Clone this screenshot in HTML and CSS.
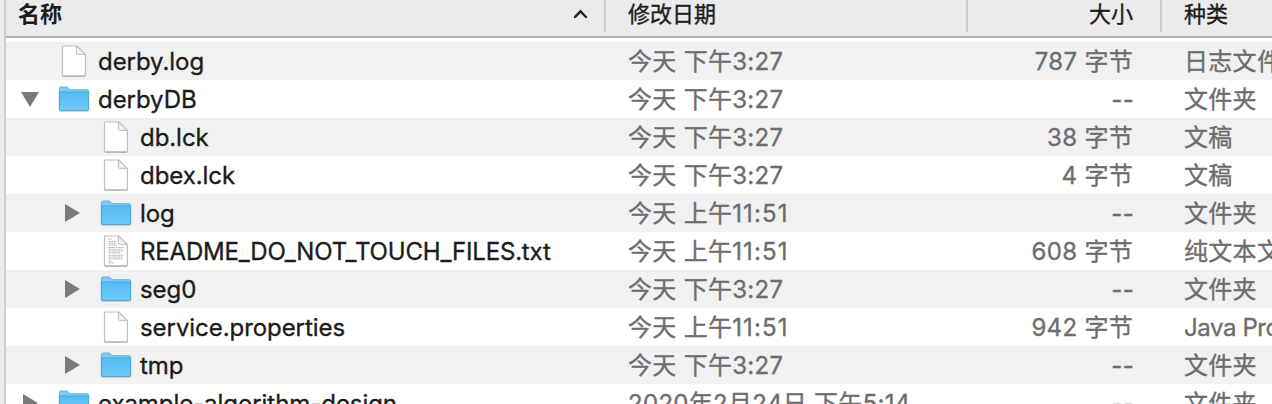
FILE: index.html
```html
<!DOCTYPE html>
<html lang="zh-CN">
<head>
<meta charset="utf-8">
<title>derbyDB</title>
<link rel="stylesheet" href="styles.css">
</head>
<body>
<svg class="defs" width="0" height="0" aria-hidden="true">
  <defs>
    <linearGradient id="blue" x1="0" y1="0" x2="0" y2="1"><stop offset="0" stop-color="#56bcf4"/><stop offset="1" stop-color="#6dcaf9"/></linearGradient>
    <linearGradient id="fold" x1="0" y1="1" x2="1" y2="0"><stop offset="0" stop-color="#fff"/><stop offset="1" stop-color="#ddd"/></linearGradient>
    <symbol id="folder" viewBox="0 -0.5 32 28">
      <path d="M1.5 25.5H30.5" stroke="#7a9aaa" stroke-opacity=".6" stroke-width="1.4"/>
      <path d="M1.4 24V3.2Q1.4 1.5 3 1.5H8.6Q9.8 1.5 10.6 2.5L11.3 3.4Q12 4.2 13.2 4.2H29.2Q30.6 4.2 30.6 5.6V24Z" fill="#83cbee" stroke="#62add2" stroke-width=".9"/>
      <path d="M1.4 6.4H30.6V23.8Q30.6 25 29.4 25H2.6Q1.4 25 1.4 23.8Z" fill="url(#blue)" stroke="#4ba5d5" stroke-width=".9"/>
    </symbol>
    <symbol id="page" viewBox="0 0.5 26 33">
      <path d="M1.5 1.5H15.8L24.4 10V30.4Q24.4 31.5 23.3 31.5H2.6Q1.5 31.5 1.5 30.4Z" fill="#fff" stroke="#c0c0c0" stroke-width="1.2" stroke-linejoin="round"/>
      <path d="M2 31.6H24" stroke="#a0a0a0" stroke-width="1"/>
      <path d="M15.4 1.6V8.4Q15.4 9.8 16.8 9.8H24.2Z" fill="url(#fold)" stroke="#bababa" stroke-width="1" stroke-linejoin="round"/>
    </symbol>
    <symbol id="text-page" viewBox="0 0 26 33">
      <use href="#page" width="26" height="33"/>
      <path d="M5.5 4H9M5.5 6.5H14M5.5 8.3H13M5.5 10.1H14M5.5 12.5H20.5M5.5 14.3H19.5M5.5 16.1H20.5M5.5 17.9H18M5.5 20.3H20.5M5.5 22.1H19.5M5.5 23.9H20M5.5 26.1H9M5.5 27.9H11" stroke="#b0b0b0" stroke-width=".9" stroke-dasharray="2.4 .5 1.5 .4"/>
    </symbol>
    <symbol id="right" viewBox="0 0 15 18"><path d="M0 0L15 9L0 18Z" fill="#7a7a7a"/></symbol>
    <symbol id="down" viewBox="0 0 18 15"><path d="M0 0H18L9 15Z" fill="#7a7a7a"/></symbol>
  </defs>
</svg>
<div class="window">
  <header class="row head">
    <div class="name sorted"><span>名称</span><svg class="sort" viewBox="0 0 15 10"><path d="M2 8L7.5 2.3L13 8" fill="none" stroke="#252525" stroke-width="2.5" stroke-linecap="round"/></svg></div>
    <div class="date">修改日期</div>
    <div class="size">大小</div>
    <div class="kind">种类</div>
  </header>
  <main class="list">
    <div class="row"><div class="name"><i class="toggle"></i><i class="icon"><svg class="page"><use href="#page"/></svg></i><span class="label">derby.log</span></div><div class="date">今天 下午<b class="time">3:27</b></div><div class="size"><b>787</b> 字节</div><div class="kind">日志文件</div></div>
    <div class="row"><div class="name"><i class="toggle"><svg class="down"><use href="#down"/></svg></i><i class="icon"><svg class="folder"><use href="#folder"/></svg></i><span class="label">derbyDB</span></div><div class="date">今天 下午<b class="time">3:27</b></div><div class="size dash">--</div><div class="kind">文件夹</div></div>
    <div class="row child"><div class="name"><i class="toggle"></i><i class="icon"><svg class="page"><use href="#page"/></svg></i><span class="label">db.lck</span></div><div class="date">今天 下午<b class="time">3:27</b></div><div class="size"><b>38</b> 字节</div><div class="kind">文稿</div></div>
    <div class="row child"><div class="name"><i class="toggle"></i><i class="icon"><svg class="page"><use href="#page"/></svg></i><span class="label">dbex.lck</span></div><div class="date">今天 下午<b class="time">3:27</b></div><div class="size"><b>4</b> 字节</div><div class="kind">文稿</div></div>
    <div class="row child"><div class="name"><i class="toggle"><svg class="right"><use href="#right"/></svg></i><i class="icon"><svg class="folder"><use href="#folder"/></svg></i><span class="label">log</span></div><div class="date">今天 上午<b class="time wide">11:51</b></div><div class="size dash">--</div><div class="kind">文件夹</div></div>
    <div class="row child"><div class="name"><i class="toggle"></i><i class="icon"><svg class="page"><use href="#text-page"/></svg></i><span class="label caps">README_DO_NOT_TOUCH_FILES.txt</span></div><div class="date">今天 上午<b class="time wide">11:51</b></div><div class="size"><b>608</b> 字节</div><div class="kind">纯文本文稿</div></div>
    <div class="row child"><div class="name"><i class="toggle"><svg class="right"><use href="#right"/></svg></i><i class="icon"><svg class="folder"><use href="#folder"/></svg></i><span class="label">seg0</span></div><div class="date">今天 下午<b class="time">3:27</b></div><div class="size dash">--</div><div class="kind">文件夹</div></div>
    <div class="row child"><div class="name"><i class="toggle"></i><i class="icon"><svg class="page"><use href="#page"/></svg></i><span class="label">service.properties</span></div><div class="date">今天 上午<b class="time wide">11:51</b></div><div class="size"><b>942</b> 字节</div><div class="kind latin">Java Properties</div></div>
    <div class="row child"><div class="name"><i class="toggle"><svg class="right"><use href="#right"/></svg></i><i class="icon"><svg class="folder"><use href="#folder"/></svg></i><span class="label">tmp</span></div><div class="date">今天 下午<b class="time">3:27</b></div><div class="size dash">--</div><div class="kind">文件夹</div></div>
    <div class="row"><div class="name"><i class="toggle"><svg class="right"><use href="#right"/></svg></i><i class="icon"><svg class="folder"><use href="#folder"/></svg></i><span class="label">example-algorithm-design</span></div><div class="date"><b>2020</b>年<b>2</b>月<b>24</b>日 下午<b class="time">5:14</b></div><div class="size dash">--</div><div class="kind">文件夹</div></div>
  </main>
</div>
</body>
</html>
```
FILE: styles.css
```css
* { box-sizing: border-box; }
body { margin: 0; height: 404px; overflow: hidden; background: #ececec; font-family: Inter, "Noto Sans CJK SC", sans-serif; }
.defs { display: block; height: 0; }
.window { height: 404px; margin-left: 4px; border-left: 2px solid #cfcdcd; background: #fff; overflow: hidden; }
.row { display: grid; grid-template-columns: 600px 362px 194px 110px; height: 38px; line-height: 40px; font-size: 24px; color: #6d6d6d; white-space: nowrap; }
.row > div { overflow: hidden; }
.list { padding-top: 4px; }
.list .row { -webkit-text-stroke: .35px currentColor; }
.list .row:nth-child(odd) { background: #f1f1f1; }
.name { display: flex; align-items: center; color: #1c1c1c; }
.date { padding-left: 22px; }
.size { padding-right: 27px; text-align: right; }
.kind { padding-left: 22px; }
.row b { font-weight: 400; }
.list .date, .list .kind, .list .size { letter-spacing: .3px; }
.list .size { padding-right: 29px; }
.list .dash { padding-right: 28px; }
.list .wide { letter-spacing: 1.1px; }
.list .latin { letter-spacing: -.4px; }
.label { padding-top: 2px; line-height: 38px; letter-spacing: -.06px; }
.caps { letter-spacing: -.18px; }
.child .name { padding-left: 42px; }
.toggle { display: flex; width: 52px; flex: none; padding-left: 15px; }
.toggle svg { display: block; }
.right { width: 15px; height: 18px; margin-left: 2px; }
.down { width: 18px; height: 15px; }
.icon { display: flex; width: 40px; flex: none; }
.folder { width: 32px; height: 28px; }
.page { width: 26px; height: 33px; margin-left: 3px; }
.head { height: 38px; line-height: 28px; border-bottom: 2px solid #b1b1b1; background: #ebebeb; font-size: 22px; color: #1c1c1c; font-weight: 400; -webkit-text-stroke: .35px currentColor; }
.head > div { height: 32px; border-right: 2px solid #cdcdcd; }
.head .kind { border-right: 0; }
.sorted { align-items: flex-start; justify-content: space-between; padding: 0 16px 0 12px; font-weight: 700; -webkit-text-stroke: 0; }
.sort { width: 15px; height: 10px; margin-top: 9px; }
```
